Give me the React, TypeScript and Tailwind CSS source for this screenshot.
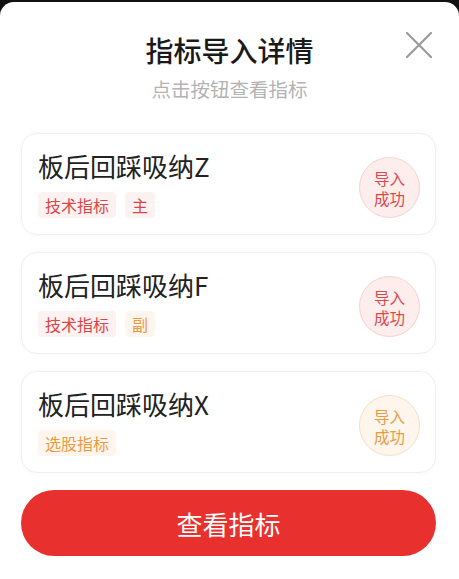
import React from "react";

type Tone = "red" | "orange";

const tagTone: Record<Tone, string> = {
  red: "bg-[#fdf2f2] text-[#dc4448]",
  orange: "bg-[#fef6ee] text-[#ec9a3e]",
};

const badgeTone: Record<Tone, string> = {
  red: "bg-[#fdeded] border-[#f6d2d2] text-[#d8494c]",
  orange: "bg-[#fef5ec] border-[#f7dfc4] text-[#e99a44]",
};

type Item = {
  name: string;
  tags: { label: string; tone: Tone }[];
  status: Tone;
};

const items: Item[] = [
  {
    name: "板后回踩吸纳Z",
    tags: [
      { label: "技术指标", tone: "red" },
      { label: "主", tone: "red" },
    ],
    status: "red",
  },
  {
    name: "板后回踩吸纳F",
    tags: [
      { label: "技术指标", tone: "red" },
      { label: "副", tone: "orange" },
    ],
    status: "red",
  },
  {
    name: "板后回踩吸纳X",
    tags: [{ label: "选股指标", tone: "orange" }],
    status: "orange",
  },
];

function IndicatorCard({ item }: { item: Item }) {
  return (
    <div className="flex items-center justify-between rounded-[16px] border border-[#efefef] bg-white pt-[16px] pb-[16px] pl-[16px] pr-[15px] shadow-[0_0_6px_rgba(0,0,0,0.03)]">
      <div className="flex flex-col">
        <p className="text-[26px] leading-[32px] text-[#222]">{item.name}</p>
        <div className="mt-[10px] flex gap-[9px]">
          {item.tags.map((t) => (
            <span
              key={t.label}
              className={`h-[26px] rounded-[4px] px-[7px] text-[16px] leading-[26px] ${tagTone[t.tone]}`}
            >
              {t.label}
            </span>
          ))}
        </div>
      </div>
      <div
        className={`mt-[7px] flex h-[61px] w-[61px] flex-col items-center justify-center rounded-full border text-[15.5px] leading-[20px] ${badgeTone[item.status]}`}
      >
        <span>导入</span>
        <span>成功</span>
      </div>
    </div>
  );
}

export default function App() {
  return (
    <div
      className="h-[579px] w-[459px] overflow-hidden bg-[#111] pt-[2px]"
      style={{ fontFamily: '"Noto Sans CJK SC", "Noto Sans", sans-serif' }}
    >
      <div className="relative flex h-[590px] flex-col rounded-[14px] bg-white pt-[30px]">
        <button className="absolute right-[26px] top-[29px] h-[28px] w-[28px] text-[#9a9a9a]" aria-label="关闭">
          <svg viewBox="0 0 28 28" width="28" height="28" fill="none" stroke="currentColor" strokeWidth="2.2" strokeLinecap="round">
            <path d="M2 2 L26 26 M26 2 L2 26" />
          </svg>
        </button>
        <h1 className="text-center text-[28px] font-medium leading-[36px] text-[#1a1a1a]">指标导入详情</h1>
        <p className="mt-[9px] text-center text-[19.5px] leading-[24px] text-[#b3b3b3]">点击按钮查看指标</p>

        <div className="mt-[32px] ml-[21px] mr-[23px] flex flex-col gap-[17px]">
          {items.map((it) => (
            <IndicatorCard key={it.name} item={it} />
          ))}
          <button className="h-[66px] rounded-full bg-[#e8302f] text-[26px] text-white">查看指标</button>
        </div>
      </div>
    </div>
  );
}
